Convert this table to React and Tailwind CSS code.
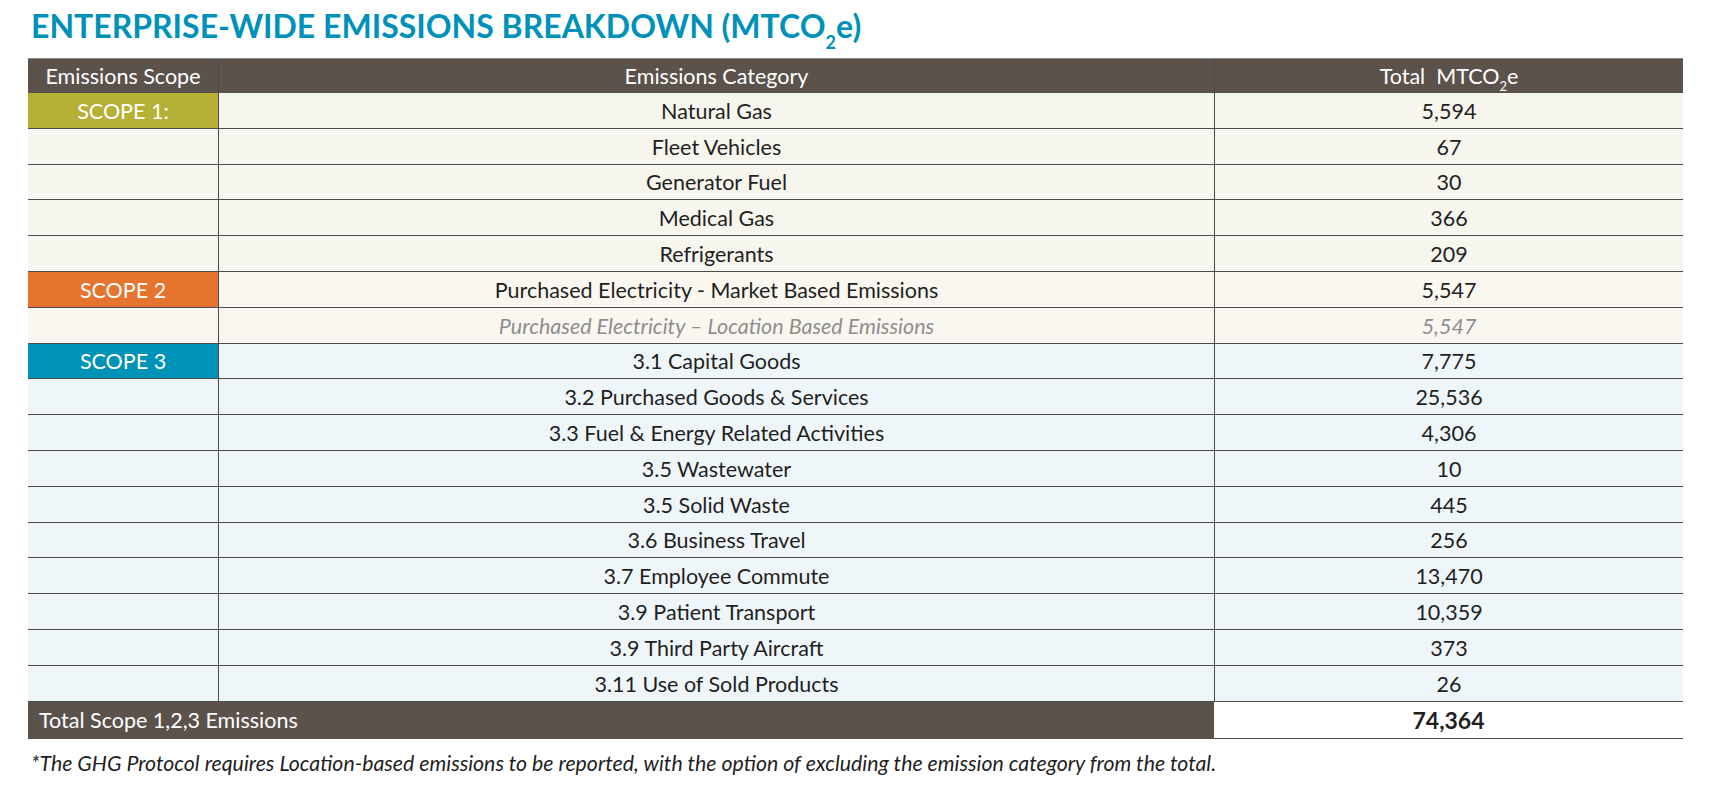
import React from 'react';

const ROW_BG = {
  one: 'bg-[#f6f5ee]',
  two: 'bg-[#faf7f0]',
  three: 'bg-[#eff6f9]',
};

const rows = [
  { scope: 'SCOPE 1:', scopeBg: 'bg-[#b6b136]', cat: 'Natural Gas', val: '5,594', tone: 'one' },
  { cat: 'Fleet Vehicles', val: '67', tone: 'one' },
  { cat: 'Generator Fuel', val: '30', tone: 'one' },
  { cat: 'Medical Gas', val: '366', tone: 'one' },
  { cat: 'Refrigerants', val: '209', tone: 'one' },
  { scope: 'SCOPE 2', scopeBg: 'bg-[#e5742f]', cat: 'Purchased Electricity - Market Based Emissions', val: '5,547', tone: 'two' },
  { cat: 'Purchased Electricity \u2013 Location Based Emissions', val: '5,547', tone: 'two', muted: true },
  { scope: 'SCOPE 3', scopeBg: 'bg-[#0192b8]', cat: '3.1 Capital Goods', val: '7,775', tone: 'three' },
  { cat: '3.2 Purchased Goods & Services', val: '25,536', tone: 'three' },
  { cat: '3.3 Fuel & Energy Related Activities', val: '4,306', tone: 'three' },
  { cat: '3.5 Wastewater', val: '10', tone: 'three' },
  { cat: '3.5 Solid Waste', val: '445', tone: 'three' },
  { cat: '3.6 Business Travel', val: '256', tone: 'three' },
  { cat: '3.7 Employee Commute', val: '13,470', tone: 'three' },
  { cat: '3.9 Patient Transport', val: '10,359', tone: 'three' },
  { cat: '3.9 Third Party Aircraft', val: '373', tone: 'three' },
  { cat: '3.11 Use of Sold Products', val: '26', tone: 'three' },
];

const EmissionsRow = ({ row }) => {
  const text = row.muted ? 'italic text-[#8e8e8e]' : 'text-[#1f1f1f]';
  return (
    <div
      className={`grid grid-cols-[190px_996px_469px] h-[35.8px] border-b border-[#4b4b4b] ${ROW_BG[row.tone]}`}
    >
      {row.scope ? (
        <div className={`flex items-center justify-center pt-[1px] text-white ${row.scopeBg}`}>
          {row.scope}
        </div>
      ) : (
        <div />
      )}
      <div className={`flex items-center justify-center border-l border-[#4b4b4b] pt-[1px] ${text}`}>
        {row.cat}
      </div>
      <div className={`flex items-center justify-center border-l border-[#4b4b4b] pt-[1px] ${text}`}>
        {row.val}
      </div>
    </div>
  );
};

const App = () => {
  return (
    <div className="min-h-screen bg-white pl-[28px] pt-[7px] font-['Lato',sans-serif] text-[21.5px]">
      {/* title */}
      <h1 className="pl-[3px] text-[32px] font-bold leading-[37px] tracking-[0px] text-[#0091b9]">
        ENTERPRISE-WIDE EMISSIONS BREAKDOWN (MTCO
        <sub className="text-[18px] align-[-6px]">2</sub>e)
      </h1>

      <div className="mt-[14px] w-[1655px]">
        {/* header */}
        <div className="grid grid-cols-[190px_996px_469px] h-[35px] bg-[#5b524c] text-white border-t border-[#8f8883]">
          <div className="flex items-center justify-center">Emissions Scope</div>
          <div className="flex items-center justify-center border-l border-[#4b4b4b]">
            Emissions Category
          </div>
          <div className="flex items-center justify-center border-l border-[#4b4b4b]">
            <span>
              Total&nbsp; MTCO<sub className="text-[13px] align-[-4px]">2</sub>e
            </span>
          </div>
        </div>

        {rows.map((row, i) => (
          <EmissionsRow key={i} row={row} />
        ))}

        {/* total */}
        <div className="grid grid-cols-[1186px_469px] h-[37px]">
          <div className="flex items-center bg-[#5b524c] pl-[11px] pt-[1px] text-white">
            Total Scope 1,2,3 Emissions
          </div>
          <div className="flex items-center justify-center border-b border-[#4b4b4b] bg-white pt-[1px] text-[23px] font-bold text-[#1f1f1f]">
            74,364
          </div>
        </div>
      </div>

      <p className="mt-[9px] pl-[3px] text-[21.3px] italic text-[#1f1f1f]">
        *The GHG Protocol requires Location-based emissions to be reported, with the option of excluding the emission category from the total.
      </p>
    </div>
  );
};

export default App;
